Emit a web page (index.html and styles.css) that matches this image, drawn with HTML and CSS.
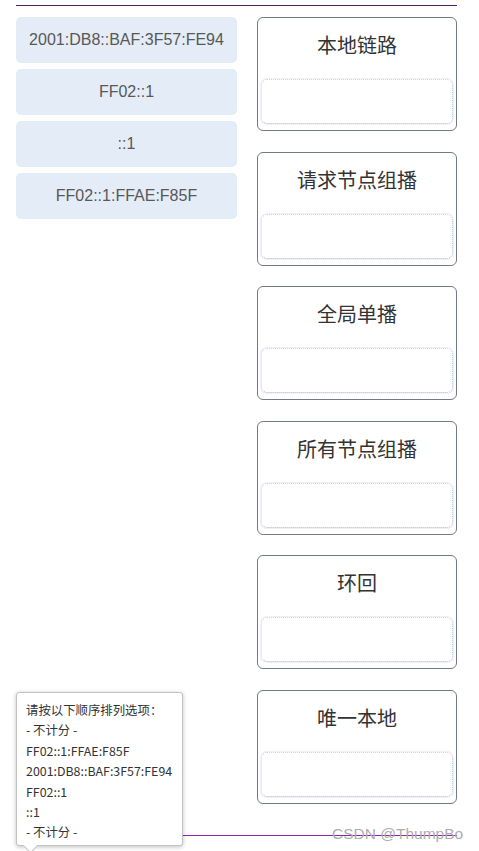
FILE: index.html
```html
<!DOCTYPE html>
<html lang="zh-CN">
<head>
  <meta charset="UTF-8" />
  <meta name="viewport" content="width=device-width, initial-scale=1.0"/>
  <title>IPv6 地址类型配对</title>
  <link rel="stylesheet" href="styles.css">
</head>
<body>
  <div class="page">
    <div class="top-line"></div>
    <div class="match">
      <div class="options">
        <div class="option">2001:DB8::BAF:3F57:FE94</div>
        <div class="option">FF02::1</div>
        <div class="option">::1</div>
        <div class="option">FF02::1:FFAE:F85F</div>
      </div>
      <div class="targets">
        <div class="target">
          <div class="target-title">本地链路</div>
          <div class="drop"></div>
        </div>
        <div class="target">
          <div class="target-title">请求节点组播</div>
          <div class="drop"></div>
        </div>
        <div class="target">
          <div class="target-title">全局单播</div>
          <div class="drop"></div>
        </div>
        <div class="target">
          <div class="target-title">所有节点组播</div>
          <div class="drop"></div>
        </div>
        <div class="target">
          <div class="target-title">环回</div>
          <div class="drop"></div>
        </div>
        <div class="target">
          <div class="target-title">唯一本地</div>
          <div class="drop"></div>
        </div>
      </div>
    </div>
    <div class="bottom-line"></div>
    <div class="watermark">CSDN @ThumpBo</div>
    <div class="tooltip">
      <p>请按以下顺序排列选项：</p>
      <p>- 不计分 -</p>
      <p>FF02::1:FFAE:F85F</p>
      <p>2001:DB8::BAF:3F57:FE94</p>
      <p>FF02::1</p>
      <p>::1</p>
      <p>- 不计分 -</p>
    </div>
  </div>
</body>
</html>
```

FILE: styles.css
```css
body {
  margin: 0;
  padding: 0;
  background: #fff;
  font-family: "Liberation Sans", Arial, sans-serif;
}

.page {
  position: relative;
  width: 441px;
  padding: 5px 16px 0;
  height: 846px;
}

.top-line {
  height: 1px;
  background: #4b1e5f;
}

.match {
  display: flex;
  gap: 20px;
  margin-top: 11px;
}

.options {
  width: 221px;
  display: flex;
  flex-direction: column;
  gap: 6px;
}

.option {
  height: 46px;
  line-height: 46px;
  background: #e4ecf7;
  border-radius: 5px;
  text-align: center;
  color: #585858;
  font-size: 16px;
}

.targets {
  width: 200px;
  display: flex;
  flex-direction: column;
  gap: 20.6px;
}

.target {
  box-sizing: border-box;
  height: 114px;
  border: 1px solid #737a82;
  border-radius: 6px;
  padding: 3px;
  display: flex;
  flex-direction: column;
}

.target-title {
  height: 58px;
  line-height: 48px;
  text-align: center;
  font-size: 20px;
  color: #333;
  font-family: "Noto Sans CJK SC", sans-serif;
}

.drop {
  flex: 1;
  border: 1px dotted;
  border-color: #e2c6f5 #a9c2de #a7b3c6 #e2c6f5;
  border-radius: 6px;
  box-shadow: 0 0 0 1px #f5ecfc;
  margin: 0 0 3px;
}

.bottom-line {
  position: absolute;
  left: 16px;
  top: 835px;
  width: 441px;
  height: 1px;
  background: #8e24aa;
}

.watermark {
  position: absolute;
  left: 332px;
  top: 825px;
  font-size: 15.5px;
  color: #adadad;
  white-space: nowrap;
  font-family: "Liberation Sans", Arial, sans-serif;
}

.tooltip {
  position: absolute;
  left: 16px;
  top: 692px;
  box-sizing: border-box;
  width: 167px;
  height: 154px;
  background: #fff;
  border: 1px solid #c2c2c2;
  border-radius: 3px;
  box-shadow: 0 1px 4px rgba(0, 0, 0, 0.25);
  padding: 7px 9px;
  font-family: "Noto Sans CJK SC", sans-serif;
  font-size: 12.4px;
  color: #333;
}

.tooltip p {
  margin: 0;
  line-height: 20.4px;
}

.tooltip::after {
  content: "";
  position: absolute;
  left: 8px;
  bottom: -6px;
  width: 10px;
  height: 10px;
  background: #fff;
  border-right: 1px solid #c2c2c2;
  border-bottom: 1px solid #c2c2c2;
  transform: rotate(45deg);
}
```
